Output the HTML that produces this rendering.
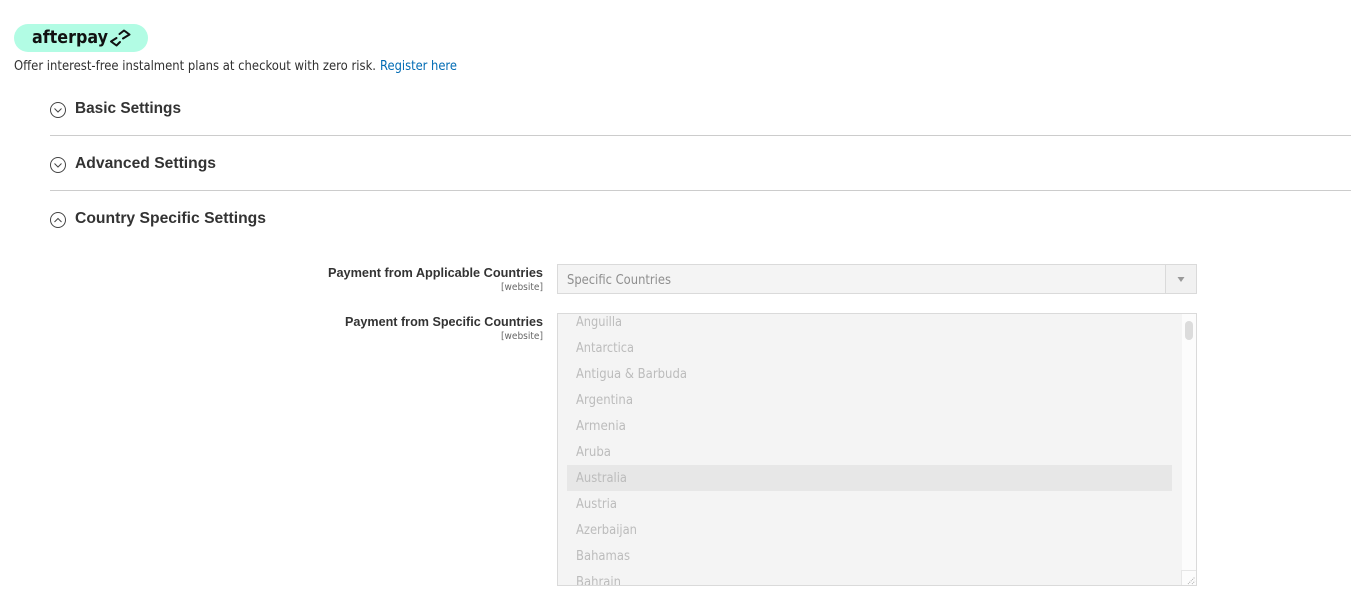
<!DOCTYPE html>
<html><head><meta charset="utf-8"><style>
html,body{margin:0;padding:0;background:#fff;width:1351px;height:610px;overflow:hidden}
svg{display:block;font-family:"DejaVu Sans","Liberation Sans",sans-serif}
.h{font-family:"Liberation Sans",sans-serif;font-size:16px;font-weight:700;fill:#333}
.l{font-family:"Liberation Sans",sans-serif;font-size:12.500px;font-weight:700;fill:#333}
.w{font-size:10px;fill:#666}
.o{font-size:13px;fill:#bcbcbc}
</style></head><body>
<svg width="1351" height="610" viewBox="0 0 1351 610" xmlns="http://www.w3.org/2000/svg">
<rect x="14" y="24" width="134" height="28" rx="14" fill="#b2fce4"/>
<text x="32" y="43" font-size="17.500" font-weight="700" fill="#111" textLength="76" lengthAdjust="spacingAndGlyphs">afterpay</text>
<g fill="none" stroke="#111" stroke-width="2" stroke-linejoin="round" stroke-linecap="round">
<path d="M119.500 34 L124 30.500 L129.500 34.500 L123 38.500"/><path d="M116.500 38 L111 41.500 L116.500 45.500 L120 42"/>
</g>
<text x="14" y="70" font-size="13" fill="#303030" textLength="362" lengthAdjust="spacingAndGlyphs">Offer interest-free instalment plans at checkout with zero risk.</text>
<text x="380" y="70" font-size="13" fill="#006bb4" textLength="77" lengthAdjust="spacingAndGlyphs">Register here</text>

<g fill="none" stroke="#444" stroke-width="1">
<circle cx="58" cy="110" r="7.500"/><path d="M54.500 108.500 L58 112 L61.500 108.500"/>
<circle cx="58" cy="165" r="7.500"/><path d="M54.500 163.500 L58 167 L61.500 163.500"/>
<circle cx="58" cy="220" r="7.500"/><path d="M54.500 222 L58 218.500 L61.500 222"/>
</g>
<text class="h" x="75" y="113" textLength="106" lengthAdjust="spacingAndGlyphs">Basic Settings</text>
<text class="h" x="75" y="168" textLength="141" lengthAdjust="spacingAndGlyphs">Advanced Settings</text>
<text class="h" x="75" y="223" textLength="191" lengthAdjust="spacingAndGlyphs">Country Specific Settings</text>
<rect x="50" y="135" width="1301" height="1" fill="#cccccc"/>
<rect x="50" y="190" width="1301" height="1" fill="#cccccc"/>

<text class="l" x="328" y="277" textLength="215" lengthAdjust="spacingAndGlyphs">Payment from Applicable Countries</text>
<text class="w" x="501" y="290" textLength="42" lengthAdjust="spacingAndGlyphs">[website]</text>
<text class="l" x="345" y="326" textLength="198" lengthAdjust="spacingAndGlyphs">Payment from Specific Countries</text>
<text class="w" x="501" y="339" textLength="42" lengthAdjust="spacingAndGlyphs">[website]</text>

<rect x="557.500" y="264.500" width="639" height="29" fill="#f4f4f4" stroke="#dadada"/>
<rect x="1166" y="265" width="30" height="28" fill="#f1f1f1"/>
<rect x="1165" y="264" width="1" height="30" fill="#dadada"/>
<path d="M1177.500 277 H1184.500 L1181 282 Z" fill="#999"/>
<text x="567" y="284" font-size="13" fill="#8e8e8e" textLength="104" lengthAdjust="spacingAndGlyphs">Specific Countries</text>

<svg x="558" y="314" width="638" height="271" viewBox="558 314 638 271">
<rect x="558" y="314" width="638" height="271" fill="#f4f4f4"/>
<rect x="567" y="465" width="605" height="26" fill="#e7e7e7"/>
<text class="o" x="576" y="326" textLength="46" lengthAdjust="spacingAndGlyphs">Anguilla</text>
<text class="o" x="576" y="352" textLength="58" lengthAdjust="spacingAndGlyphs">Antarctica</text>
<text class="o" x="576" y="378" textLength="111" lengthAdjust="spacingAndGlyphs">Antigua &amp; Barbuda</text>
<text class="o" x="576" y="404" textLength="57" lengthAdjust="spacingAndGlyphs">Argentina</text>
<text class="o" x="576" y="430" textLength="50" lengthAdjust="spacingAndGlyphs">Armenia</text>
<text class="o" x="576" y="456" textLength="35" lengthAdjust="spacingAndGlyphs">Aruba</text>
<text class="o" x="576" y="482" textLength="51" lengthAdjust="spacingAndGlyphs">Australia</text>
<text class="o" x="576" y="508" textLength="41" lengthAdjust="spacingAndGlyphs">Austria</text>
<text class="o" x="576" y="534" textLength="61" lengthAdjust="spacingAndGlyphs">Azerbaijan</text>
<text class="o" x="576" y="560" textLength="54" lengthAdjust="spacingAndGlyphs">Bahamas</text>
<text class="o" x="576" y="586" textLength="45" lengthAdjust="spacingAndGlyphs">Bahrain</text>
<rect x="1182" y="314" width="14" height="271" fill="#fcfcfc"/>
<rect x="1185" y="321" width="8" height="19" rx="4" fill="#dcdcdc"/>
<rect x="1181" y="570" width="15" height="15" fill="#fcfcfc"/>
<rect x="1181" y="570" width="15" height="1" fill="#e6e6e6"/>
<rect x="1181" y="570" width="1" height="15" fill="#e6e6e6"/>
<path d="M1188 584 L1195 577 M1192 584 L1195 581" stroke="#aaa" stroke-width="1" stroke-dasharray="1 1" fill="none"/>
</svg>
<rect x="557.500" y="313.500" width="639" height="272" fill="none" stroke="#dadada"/>
</svg>
</body></html>
